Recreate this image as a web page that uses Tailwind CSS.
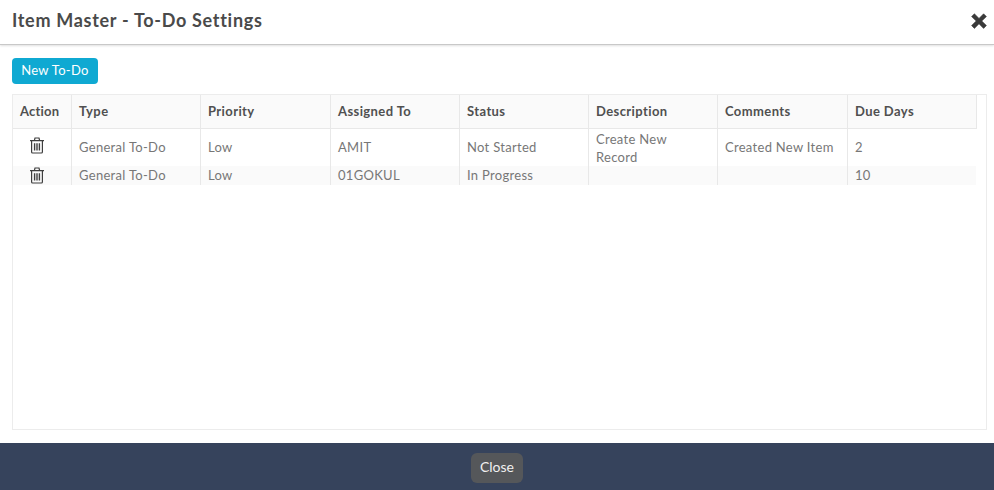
<!DOCTYPE html>
<html lang="en">
<head>
    <meta charset="UTF-8">
    <title>Item Master - To-Do Settings</title>
    <script src="https://cdn.jsdelivr.net/npm/@tailwindcss/browser@4"></script>
</head>
<body class="bg-white h-[490px] w-[994px] overflow-hidden flex flex-col font-['Lato',sans-serif] text-[13px] text-[#777]">
    <!-- header -->
    <div class="h-[45px] shrink-0 flex items-center justify-between pl-3 pr-[7px] pb-[3px] border-b border-[#c8c8c8] shadow-[0_1px_2px_rgba(0,0,0,0.12)]">
        <h1 class="text-[18px] font-bold text-[#4a4a4a] tracking-[0.7px]">Item Master - To-Do Settings</h1>
        <svg class="w-[16px] h-[16px]" viewBox="0 0 16 16" fill="#3a3a3a">
            <path d="M3.4 0.8 8 5.4 12.6 0.8 15.4 3.6 10.8 8 15.4 12.6 12.6 15.4 8 10.8 3.4 15.4 0.6 12.6 5.2 8 0.6 3.6Z" stroke="#3a3a3a" stroke-width="0.6" stroke-linejoin="round"/>
        </svg>
    </div>

    <!-- body -->
    <div class="flex-1 flex flex-col pl-3 pr-[7px] pt-[13px] pb-[13px] min-h-0">
        <button class="self-start w-[86px] h-[26px] rounded-[4px] bg-[#0fa9d2] text-white text-[13px] tracking-[0.3px]">New To-Do</button>
        <div class="mt-[10px] flex-1 border border-[#ececec]">
            <table class="table-fixed border-collapse w-[963px]">
                <colgroup>
                    <col class="w-[58px]">
                    <col class="w-[129px]">
                    <col class="w-[130px]">
                    <col class="w-[129px]">
                    <col class="w-[129px]">
                    <col class="w-[129px]">
                    <col class="w-[130px]">
                    <col class="w-[129px]">
                </colgroup>
                <thead>
                    <tr class="h-[33px] bg-[#fafafa] text-left font-bold text-[#505050] text-[13px] tracking-[0.4px]">
                        <th class="pl-[7px] tracking-[0.2px] border-b border-r border-[#e8e8e8]">Action</th>
                        <th class="pl-[7.5px] border-b border-r border-[#e8e8e8]">Type</th>
                        <th class="pl-[7.5px] border-b border-r border-[#e8e8e8]">Priority</th>
                        <th class="pl-[7.5px] border-b border-r border-[#e8e8e8]">Assigned To</th>
                        <th class="pl-[7.5px] border-b border-r border-[#e8e8e8]">Status</th>
                        <th class="pl-[7.5px] border-b border-r border-[#e8e8e8]">Description</th>
                        <th class="pl-[7.5px] border-b border-r border-[#e8e8e8]">Comments</th>
                        <th class="pl-[7.5px] border-b border-r border-[#e8e8e8]">Due Days</th>
                    </tr>
                </thead>
                <tbody class="tracking-[0.3px] leading-[18px]">
                    <tr class="h-[38px]">
                        <td class="border-r border-[#e8e8e8]">
                            <svg class="w-[16px] h-[17px] ml-[16px] mb-[4px]" viewBox="0 0 16 17" fill="none" stroke="#3f3f3f" stroke-width="1.2">
                                <path d="M1 3.6H15M5.4 3.4 6 1H10L10.6 3.4M2.6 3.8V15C2.6 15.7 3 16 3.6 16H12.4C13 16 13.4 15.7 13.4 15V3.8"/>
                                <path d="M5.6 6.2V13.6M8 6.2V13.6M10.4 6.2V13.6" stroke-width="1.4"/>
                            </svg>
                        </td>
                        <td class="pl-[7.5px] border-r border-[#e8e8e8]">General To-Do</td>
                        <td class="pl-[7.5px] border-r border-[#e8e8e8]">Low</td>
                        <td class="pl-[7.5px] border-r border-[#e8e8e8]">AMIT</td>
                        <td class="pl-[7.5px] border-r border-[#e8e8e8]">Not Started</td>
                        <td class="pl-[7.5px] pr-6 pt-px border-r border-[#e8e8e8]">Create New Record</td>
                        <td class="pl-[7.5px] border-r border-[#e8e8e8]">Created New Item</td>
                        <td class="pl-[7.5px]">2</td>
                    </tr>
                    <tr class="h-[19px] bg-[#fafafa]">
                        <td class="border-r border-[#e8e8e8]">
                            <svg class="block w-[16px] h-[17px] ml-[16px] mt-[1px] mb-[1px]" viewBox="0 0 16 17" fill="none" stroke="#3f3f3f" stroke-width="1.2">
                                <path d="M1 3.6H15M5.4 3.4 6 1H10L10.6 3.4M2.6 3.8V15C2.6 15.7 3 16 3.6 16H12.4C13 16 13.4 15.7 13.4 15V3.8"/>
                                <path d="M5.6 6.2V13.6M8 6.2V13.6M10.4 6.2V13.6" stroke-width="1.4"/>
                            </svg>
                        </td>
                        <td class="pl-[7.5px] pb-px border-r border-[#e8e8e8]">General To-Do</td>
                        <td class="pl-[7.5px] pb-px border-r border-[#e8e8e8]">Low</td>
                        <td class="pl-[7.5px] pb-px border-r border-[#e8e8e8]">01GOKUL</td>
                        <td class="pl-[7.5px] pb-px border-r border-[#e8e8e8]">In Progress</td>
                        <td class="pl-[7.5px] pb-px border-r border-[#e8e8e8]"></td>
                        <td class="pl-[7.5px] pb-px border-r border-[#e8e8e8]"></td>
                        <td class="pl-[7.5px] pb-px">10</td>
                    </tr>
                </tbody>
            </table>
        </div>
    </div>

    <!-- footer -->
    <div class="h-[47px] shrink-0 bg-[#36435c] flex items-center justify-center pt-[3px]">
        <button class="w-[52px] h-[30px] pb-[4px] rounded-[6px] bg-[#55575a] text-[#f0f0f0] text-[14px]">Close</button>
    </div>
</body>
</html>
